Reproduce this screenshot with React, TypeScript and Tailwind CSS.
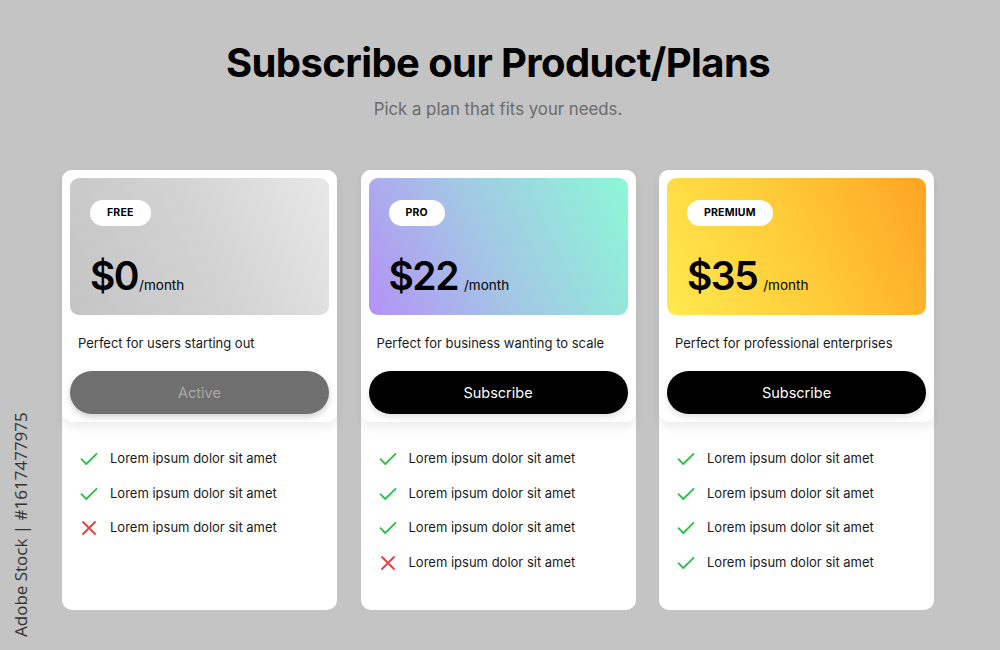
import React from "react";

type Plan = {
  badge: string;
  price: string;
  gap: string;
  desc: string;
  gradient: string;
  button: string;
  active: boolean;
  features: boolean[];
};

const plans: Plan[] = [
  {
    badge: "FREE",
    price: "$0",
    gap: "ml-[1px]",
    desc: "Perfect for users starting out",
    gradient: "bg-[linear-gradient(65deg,#c4c4c4_0%,#d2d2d2_50%,#e8e8e8_100%)]",
    button: "Active",
    active: true,
    features: [true, true, false],
  },
  {
    badge: "PRO",
    price: "$22",
    gap: "ml-[6px]",
    desc: "Perfect for business wanting to scale",
    gradient: "bg-[linear-gradient(65deg,#b492f6_0%,#a4c6e5_45%,#8cf8d6_100%)]",
    button: "Subscribe",
    active: false,
    features: [true, true, true, false],
  },
  {
    badge: "PREMIUM",
    price: "$35",
    gap: "ml-[6px]",
    desc: "Perfect for professional enterprises",
    gradient: "bg-[linear-gradient(65deg,#ffe94f_0%,#ffcb38_50%,#ffa424_100%)]",
    button: "Subscribe",
    active: false,
    features: [true, true, true, true],
  },
];

function Check() {
  return (
    <svg width="18" height="14" viewBox="0 0 18 14" fill="none">
      <path d="M1.5 7.2 L6.3 12 L16.5 1.8" stroke="#2bbf4a" strokeWidth="1.8" strokeLinecap="round" strokeLinejoin="round" />
    </svg>
  );
}

function Cross() {
  return (
    <svg width="18" height="14" viewBox="0 0 18 14" fill="none">
      <path d="M3 1 L15 13 M15 1 L3 13" stroke="#f23b3b" strokeWidth="1.8" strokeLinecap="round" />
    </svg>
  );
}

function Card({ p }: { p: Plan }) {
  return (
    <div className="w-[275px] h-[440px] bg-white rounded-[10px] flex flex-col">
      <div className="p-2 pb-2 rounded-[10px] bg-white shadow-[0_6px_10px_rgba(0,0,0,0.07)]">
        <div className={`h-[137px] rounded-[9px] ${p.gradient} pt-[22px] pl-[20px] flex flex-col`}>
          <div className="self-start h-[26px] px-[17px] rounded-full bg-white flex items-center text-[10.5px] font-bold text-black tracking-[0.2px]">
            {p.badge}
          </div>
          <div className="mt-[27px] flex items-baseline text-black">
            <span className="text-[39px] leading-[46px] font-semibold tracking-[-1.5px]">{p.price}</span>
            <span className={`text-[13.5px] ${p.gap}`}>/month</span>
          </div>
        </div>
        <div className="mt-[18px] px-[8px] text-[13px] leading-[20px] text-[#1a1a1a]">{p.desc}</div>
        <div
          className={`mt-[18px] h-[43px] rounded-full flex items-center justify-center text-[14.5px] ${
            p.active
              ? "bg-[#6f6f6f] text-[#a9a9a9] shadow-[0_3px_6px_rgba(0,0,0,0.18)]"
              : "bg-black text-white shadow-[0_3px_6px_rgba(0,0,0,0.12)]"
          }`}
        >
          {p.button}
        </div>
      </div>
      <div className="pt-[27px] pl-[18px] flex flex-col gap-[14.5px]">
        {p.features.map((ok, i) => (
          <div key={i} className="flex items-center h-[20px]">
            {ok ? <Check /> : <Cross />}
            <span className="ml-[12px] text-[13px] text-[#1a1a1a]">Lorem ipsum dolor sit amet</span>
          </div>
        ))}
      </div>
    </div>
  );
}

export default function App() {
  return (
    <div
      className="relative w-[1000px] h-[650px] overflow-hidden bg-[#c4c4c4] flex flex-col"
      style={{ fontFamily: "Inter, 'Noto Sans', sans-serif" }}
    >
      <h1 className="mt-[39px] text-center text-[40px] leading-[48px] font-bold text-black tracking-[-0.6px] -ml-[4px]">
        Subscribe our Product/Plans
      </h1>
      <p className="mt-[11px] text-center text-[16.8px] leading-[22px] text-[#6b6b6b] -ml-[4px]">
        Pick a plan that fits your needs.
      </p>
      <div className="mt-[50px] ml-[62px] flex gap-[23.5px]">
        {plans.map((p) => (
          <Card key={p.badge} p={p} />
        ))}
      </div>
      <div
        className="absolute left-[8px] bottom-[-12px] origin-top-left text-[17px] text-[#333333] whitespace-nowrap"
        style={{ fontFamily: "'Open Sans', sans-serif", transform: "rotate(-90deg)" }}
      >
        Adobe Stock | #1617477975
      </div>
    </div>
  );
}
